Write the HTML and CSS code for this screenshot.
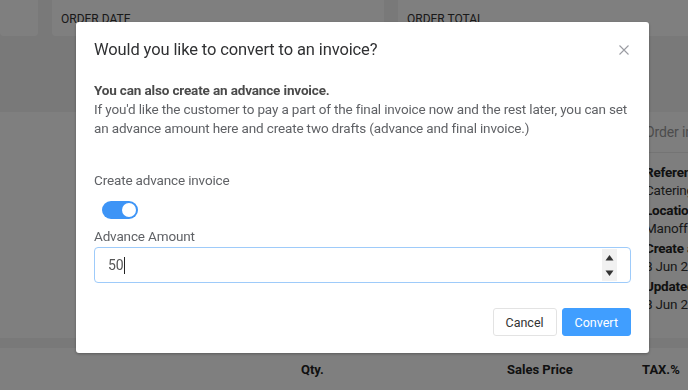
FILE: index.html
```html
<!DOCTYPE html>
<html lang="en">
<head>
    <meta charset="UTF-8">
    <title>Order</title>
    <link rel="stylesheet" href="styles.css">
</head>
<body>

<div class="page">
    <div class="summary">
        <div class="summary-card small"></div>
        <div class="summary-card"><span>ORDER DATE</span></div>
        <div class="summary-card wide"><span>ORDER TOTAL</span></div>
    </div>

    <div class="main">
        <div class="main-left"></div>
        <div class="info">
            <div class="info-head">Order info</div>
            <div class="info-body">
                <b>Reference</b>
                <span>Catering</span>
                <b>Location</b>
                <span>Manoffice</span>
                <b>Create at</b>
                <span>8 Jun 2020</span>
                <b>Updated at</b>
                <span>8 Jun 2020</span>
            </div>
        </div>
    </div>

    <div class="table-head">
        <span class="col-qty">Qty.</span>
        <span class="col-price">Sales Price</span>
        <span class="col-tax">TAX.%</span>
    </div>
</div>

<!-- Диалог конвертации -->
<div class="overlay">
    <div class="dialog">
        <div class="dialog-header">
            <h3>Would you like to convert to an invoice?</h3>
            <button class="close-btn" aria-label="Close">
                <svg width="10" height="10" viewBox="0 0 10 10"><path d="M0.5 0.5L9.5 9.5M9.5 0.5L0.5 9.5" stroke="#9a9ca2" stroke-width="1.1" fill="none"/></svg>
            </button>
        </div>
        <div class="dialog-body">
            <p class="lead"><b>You can also create an advance invoice.</b><br>
            If you'd like the customer to pay a part of the final invoice now and the rest later, you can set an advance amount here and create two drafts (advance and final invoice.)</p>

            <label class="field-label">Create advance invoice</label>
            <div class="switch"><span class="knob"></span></div>

            <label class="field-label">Advance Amount</label>
            <div class="number-input">
                <span class="value">50</span><span class="caret"></span>
                <div class="spin">
                    <svg width="9" height="7" viewBox="0 0 9 7"><path d="M4.5 1L8.5 6.5H0.5Z" fill="#333"/></svg>
                    <svg width="9" height="7" viewBox="0 0 9 7"><path d="M0.5 0.5H8.5L4.5 6Z" fill="#333"/></svg>
                </div>
            </div>
        </div>
        <div class="dialog-footer">
            <button class="btn">Cancel</button>
            <button class="btn btn-primary">Convert</button>
        </div>
    </div>
</div>

</body>
</html>
```

FILE: styles.css
```css
body {
    margin: 0;
    font-family: Roboto, "Noto Sans", sans-serif;
    background: #f2f2f2;
    overflow: hidden;
}
.page {
    height: 390px;
}
.summary {
    display: flex;
    gap: 14px;
    height: 36px;
}
.summary-card {
    background: #fff;
    width: 332px;
    border-radius: 0 0 4px 4px;
    padding: 12px 0 0 9px;
    box-sizing: border-box;
    font-size: 12px;
    color: #333;
}
.summary-card.small {
    width: 38px;
}
.summary-card.wide {
    flex: 1;
    border-radius: 0 0 0 4px;
}
.main {
    display: flex;
    margin-top: 76px;
    height: 226px;
}
.main-left {
    flex: 1;
    background: #fff;
}
.info {
    width: 55px;
    background: #fdfdfd;
    border-left: 1px solid #eee;
}
.info-head {
    height: 40px;
    line-height: 40px;
    padding-left: 12px;
    font-size: 14px;
    letter-spacing: -0.15px;
    color: #999;
    border-bottom: 1px solid #e8e8e8;
    white-space: nowrap;
}
.info-body {
    display: flex;
    flex-direction: column;
    padding: 11px 0 0 12px;
    font-size: 13.5px;
    letter-spacing: -0.2px;
    color: #222;
    white-space: nowrap;
}
.info-body b {
    line-height: 17px;
}
.info-body span {
    line-height: 18px;
    margin-bottom: 3px;
    color: #333;
}
.table-head {
    margin-top: 10px;
    height: 42px;
    background: #fff;
    box-sizing: border-box;
    padding-left: 301px;
    font-size: 13px;
    font-weight: bold;
    color: #222;
    display: flex;
    align-items: center;
    white-space: nowrap;
}
.col-qty {
    width: 206px;
}
.col-price {
    width: 135px;
}
.overlay {
    position: fixed;
    top: 0;
    left: 0;
    width: 100%;
    height: 100%;
    background: rgba(0, 0, 0, 0.5);
}
.dialog {
    position: absolute;
    top: 22px;
    left: 76px;
    width: 573px;
    height: 331px;
    background: #fff;
    border-radius: 3px;
    box-shadow: 0 1px 3px rgba(0, 0, 0, 0.3);
    box-sizing: border-box;
    padding: 0 18px;
    display: flex;
    flex-direction: column;
}
.dialog-header {
    display: flex;
    justify-content: space-between;
    align-items: center;
    padding-top: 16px;
}
.dialog-header h3 {
    margin: 0;
    font-size: 16.5px;
    letter-spacing: -0.12px;
    line-height: 24px;
    font-weight: normal;
    color: #303133;
}
.close-btn {
    border: none;
    background: none;
    padding: 0;
    margin-right: 2px;
    display: flex;
}
.dialog-body {
    padding-top: 19px;
    font-size: 13.5px;
    letter-spacing: -0.15px;
    color: #606266;
}
.lead {
    margin: 0;
    line-height: 19px;
}
.lead b {
    color: #4a4a4a;
}
.field-label {
    display: block;
    margin-top: 33px;
    line-height: 18px;
}
.switch {
    width: 36px;
    height: 18px;
    margin: 12px 0 0 8px;
    background: #3d94f6;
    border-radius: 9px;
    display: flex;
    justify-content: flex-end;
    align-items: center;
    padding: 0 2px;
    box-sizing: border-box;
}
.knob {
    width: 14px;
    height: 14px;
    border-radius: 50%;
    background: #fff;
}
.switch + .field-label {
    margin-top: 8px;
}
.number-input {
    margin-top: 2px;
    height: 36px;
    border: 1px solid #9ecbfa;
    border-radius: 4px;
    box-sizing: border-box;
    display: flex;
    align-items: center;
    padding: 0 13px 0 13px;
    color: #555;
}
.value {
    font-size: 14px;
}
.caret {
    width: 1px;
    height: 17px;
    background: #222;
    margin-left: 1px;
}
.spin {
    margin-left: auto;
    width: 15px;
    height: 32px;
    background: #f1f1f1;
    display: flex;
    flex-direction: column;
    justify-content: space-around;
    align-items: center;
}
.dialog-footer {
    margin-top: auto;
    padding-bottom: 17px;
    display: flex;
    justify-content: flex-end;
    gap: 5px;
}
.btn {
    height: 28px;
    padding: 0 12px;
    font-family: Roboto, "Noto Sans", sans-serif;
    font-size: 12.5px;
    border: 1px solid #e3e3e3;
    border-radius: 3px;
    background: #fff;
    color: #333;
}
.btn-primary {
    background: #409eff;
    border-color: #409eff;
    color: #fff;
}
```
